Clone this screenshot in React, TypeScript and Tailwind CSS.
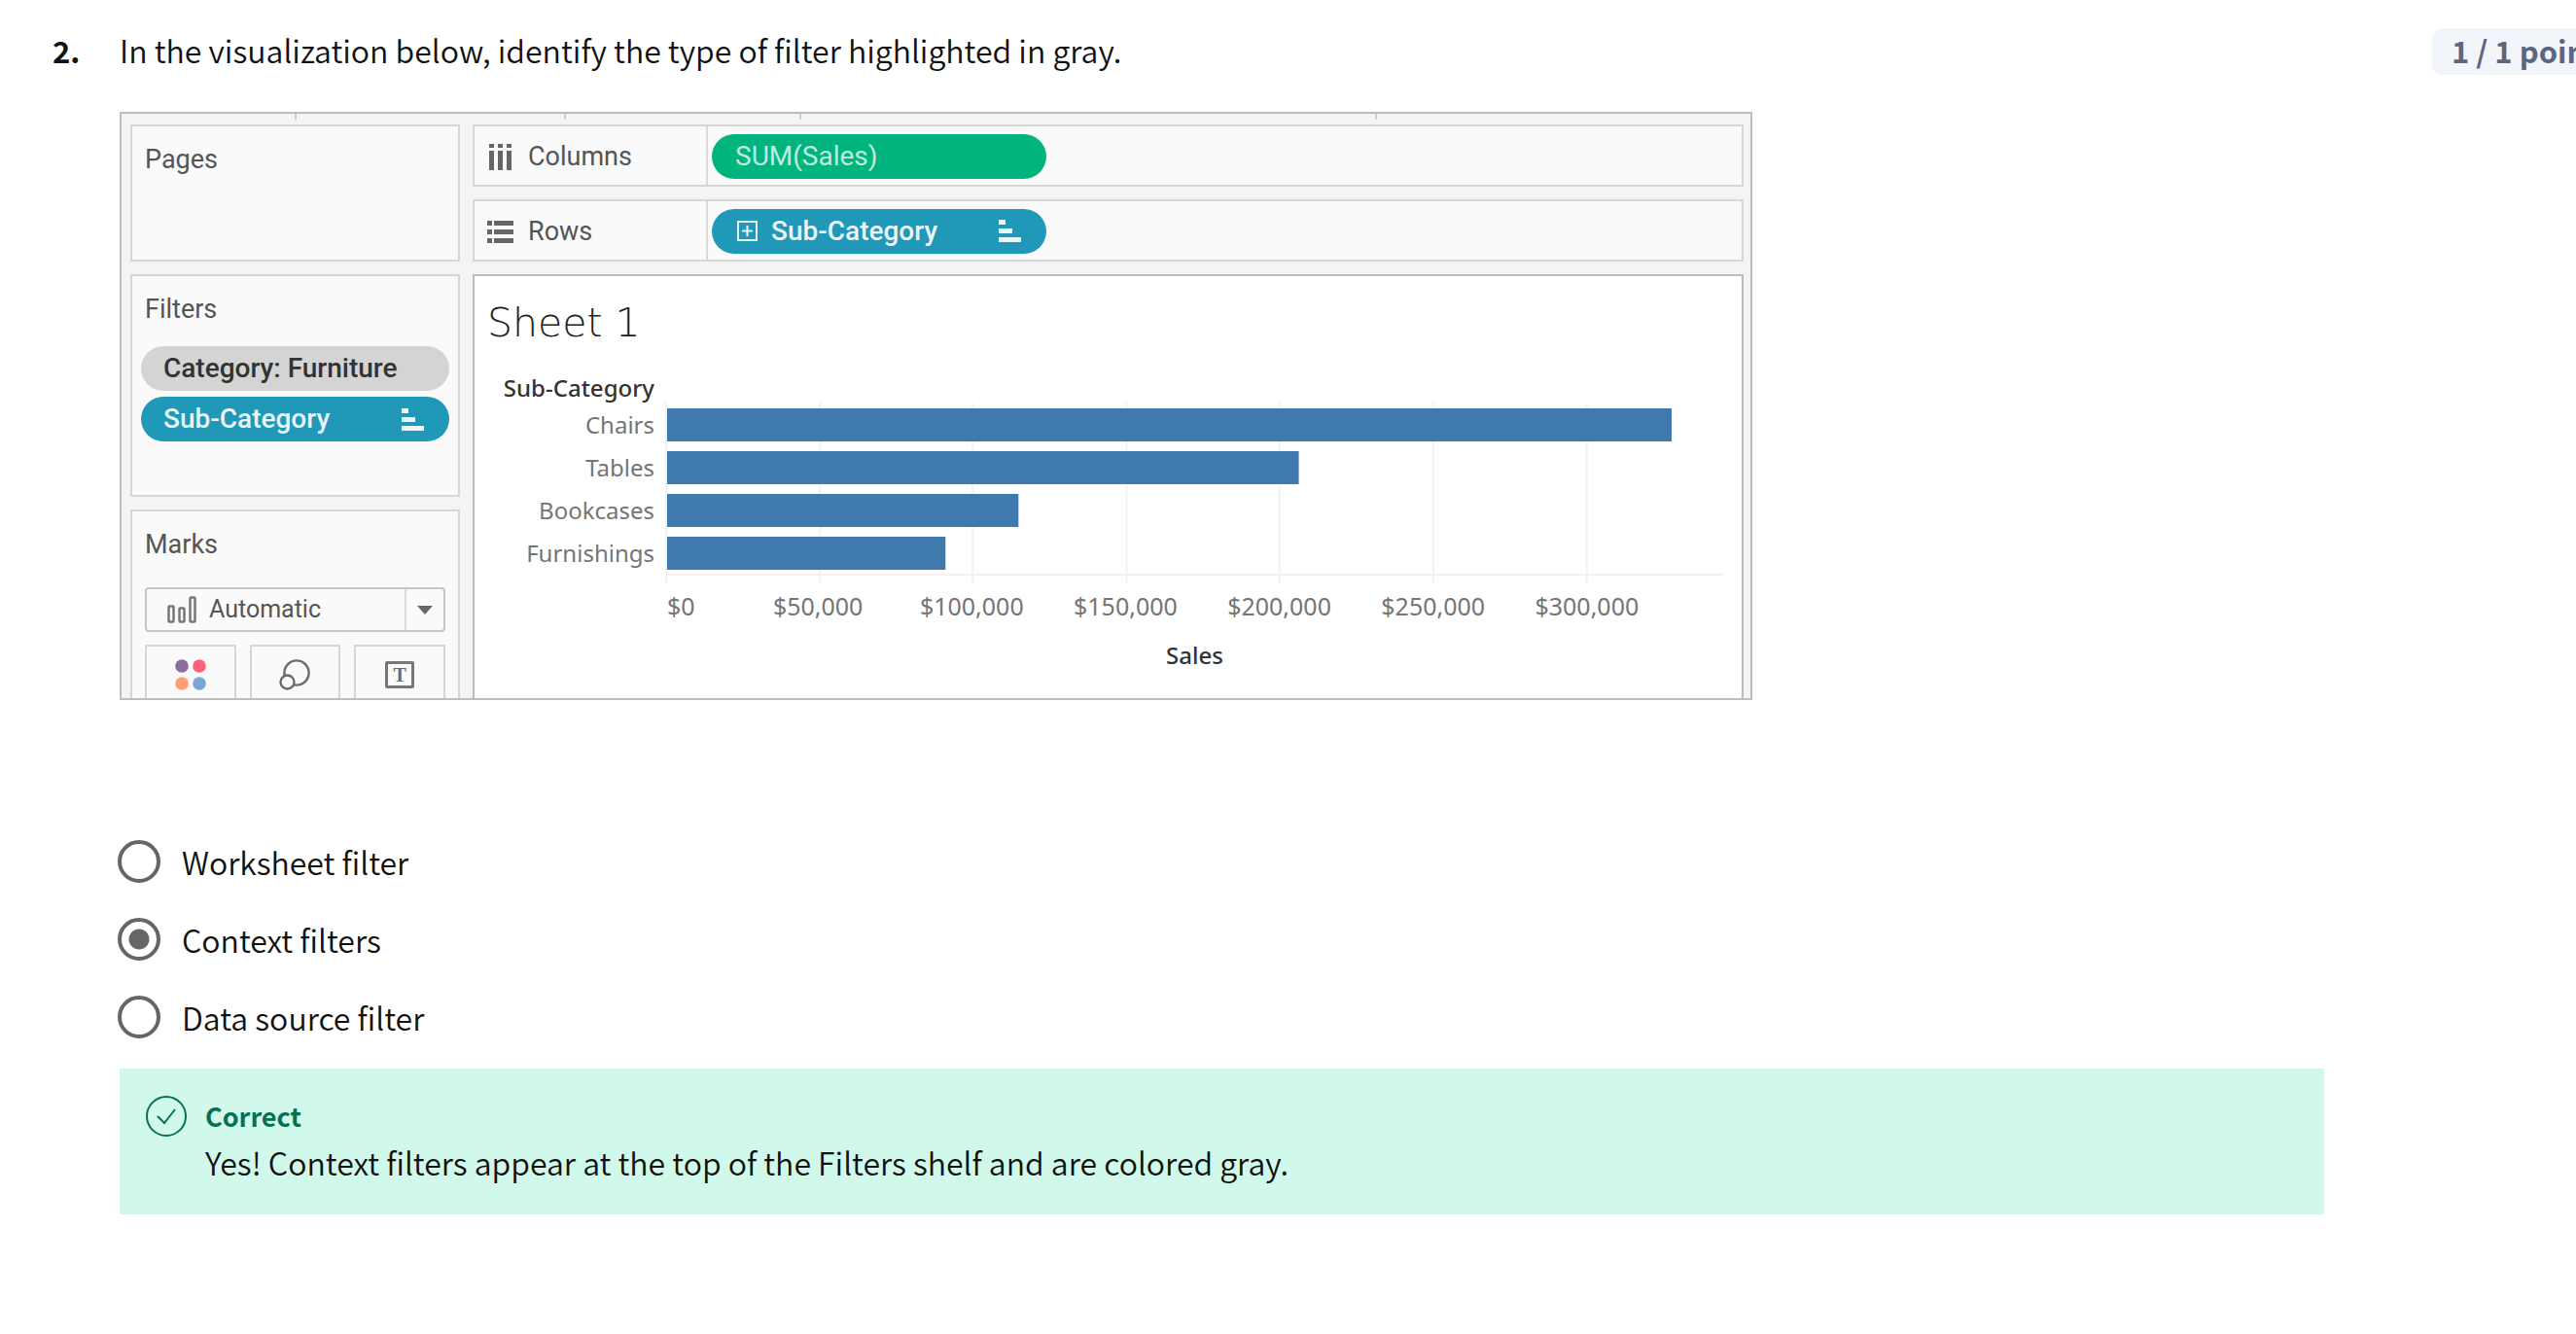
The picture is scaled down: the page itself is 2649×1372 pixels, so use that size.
import type { ReactNode } from "react";

const PAGE_FONT = "font-['Noto_Sans_CJK_SC','Noto_Sans',sans-serif]";

const categories = [
  { name: "Chairs", width: 1032 },
  { name: "Tables", width: 649 },
  { name: "Bookcases", width: 361 },
  { name: "Furnishings", width: 286 },
];
const PLOT_WIDTH = 1088;
const gridlines = [0, 158, 315, 473, 630, 788, 946];
const ticks = ["$50,000", "$100,000", "$150,000", "$200,000", "$250,000", "$300,000"];
const options = ["Worksheet filter", "Context filters", "Data source filter"];

function SortIcon() {
  return (
    <svg viewBox="0 0 23 23" className="size-[23px] shrink-0" fill="#e9f5f8" aria-hidden="true">
      <rect x="0" y="0" width="7" height="5" />
      <rect x="0" y="9" width="14" height="5" />
      <rect x="0" y="18" width="23" height="5" />
    </svg>
  );
}

function Shelf({ icon, label, children }: { icon: ReactNode; label: string; children: ReactNode }) {
  return (
    <div className="flex h-16 border-2 border-[#d6d6d6] bg-[#fafafa]">
      <div className="flex w-[240px] shrink-0 items-center gap-[15px] border-r-2 border-[#dadada] pt-0.5 pl-[13px]">
        {icon}
        <span>{label}</span>
      </div>
      <div className="flex flex-1 items-center pt-px pl-1">{children}</div>
    </div>
  );
}

function Panel({ title, className, children }: { title: string; className: string; children?: ReactNode }) {
  return (
    <section className={`border-2 border-[#d6d6d6] bg-[#fafafa] ${className}`}>
      <h2 className="px-[13px] pt-4 leading-9">{title}</h2>
      {children}
    </section>
  );
}

function BarChart() {
  return (
    <div className="flex pr-[18px] pl-7 font-['Noto_Sans',sans-serif] text-[24px] text-[#757575]">
      <div className="w-[157px] shrink-0 text-right">
        <div className="flex h-9 justify-end leading-9 font-medium whitespace-nowrap text-[#333]">Sub-Category</div>
        {categories.map((c) => (
          <div key={c.name} className="h-11 leading-10">
            {c.name}
          </div>
        ))}
      </div>
      <div className="min-w-0 flex-1 pt-[33px] pl-[11px]">
        <svg viewBox="0 0 1088 187" preserveAspectRatio="none" className="block h-[187px] w-full" role="img" aria-label="Sales by sub-category">
          {gridlines.map((x) => (
            <rect key={x} x={x} y="0" width="2" height="187" fill="#f2f2f2" />
          ))}
          <rect x="0" y="176" width={PLOT_WIDTH} height="2" fill="#f2f2f2" />
          {categories.map((c, i) => (
            <rect key={c.name} x="2" y={6 + i * 44} width={c.width} height="34" fill="#4079ab" />
          ))}
        </svg>
        <div className="grid grid-cols-[78fr_158fr_158fr_158fr_158fr_158fr_158fr_62fr] pt-1 text-center text-[25px] leading-9">
          <span className="pl-0.5 text-left">$0</span>
          {ticks.map((t) => (
            <span key={t}>{t}</span>
          ))}
        </div>
        <div className="pt-[15px] text-center leading-9 font-medium text-[#333]">Sales</div>
      </div>
    </div>
  );
}

function Worksheet() {
  return (
    <figure className="max-w-[1679px] border-2 border-[#bdbdbd] bg-[#f4f4f4] font-['Roboto',sans-serif] text-[27px] text-[#555]">
      <div className="flex h-[11px] items-start">
        <i className="h-1.5 w-[180px] border-r-2 border-[#cfcfcf]" />
        <i className="h-1.5 w-[277px] border-r-2 border-[#cfcfcf]" />
        <i className="h-1.5 w-[242px] border-r-2 border-[#cfcfcf]" />
        <i className="h-1.5 w-[592px] border-r-2 border-[#cfcfcf]" />
      </div>
      <div className="flex gap-[13px] pr-[7px] pl-[9px]">
        <div className="flex w-[339px] shrink-0 flex-col gap-[13px]">
          <Panel title="Pages" className="h-[141px]" />
          <Panel title="Filters" className="h-[229px]">
            <div className="flex flex-col gap-1.5 px-[9px] pt-5 text-[28px] font-medium">
              <div className="flex h-[46px] items-center rounded-full bg-[#d4d4d4] pl-[23px] text-[#333]">Category: Furniture</div>
              <div className="flex h-[46px] items-center justify-between rounded-full bg-[#2098b8] pr-[26px] pl-[23px] text-[#e9f5f8]">
                Sub-Category
                <SortIcon />
              </div>
            </div>
          </Panel>
          <Panel title="Marks" className="flex-1 border-b-0">
            <div className="px-[13px] pt-[26px]">
              <div className="flex h-[46px] items-center rounded-sm border-2 border-[#c6c6c6] pl-[21px]">
                <svg viewBox="0 0 30 28" className="mr-[13px] h-7 w-[30px] shrink-0" fill="none" stroke="#777" strokeWidth="2.5" aria-hidden="true">
                  <rect x="1.5" y="10.5" width="5" height="16" rx="1" />
                  <rect x="12.5" y="12.5" width="5" height="14" rx="1" />
                  <rect x="23.5" y="1.5" width="5" height="25" rx="1" />
                </svg>
                <select aria-label="Mark type" className="h-full flex-1 appearance-none bg-transparent text-[25px] outline-none">
                  <option>Automatic</option>
                </select>
                <span className="flex h-full w-10 items-center justify-center border-l-2 border-[#dadada]">
                  <svg viewBox="0 0 16 9" className="h-[9px] w-4" aria-hidden="true">
                    <path d="M0 0h16L8 9z" fill="#666" />
                  </svg>
                </span>
              </div>
              <div className="mt-[13px] grid grid-cols-3 gap-3.5">
                <button type="button" aria-label="Color" className="flex h-[55px] justify-center border-2 border-b-0 border-[#d6d6d6] pt-[13px]">
                  <svg viewBox="0 0 32 32" className="size-8">
                    <circle cx="7" cy="7" r="6.8" fill="#8a6d9c" />
                    <circle cx="25" cy="7" r="6.8" fill="#ff637c" />
                    <circle cx="7" cy="25" r="6.8" fill="#ffa072" />
                    <circle cx="25" cy="25" r="6.8" fill="#7ba6d0" />
                  </svg>
                </button>
                <button type="button" aria-label="Size" className="flex h-[55px] justify-center border-2 border-b-0 border-[#d6d6d6] pt-[13px]">
                  <svg viewBox="0 0 32 32" className="size-8" fill="#fafafa" stroke="#6b6b6b" strokeWidth="2.4">
                    <circle cx="18" cy="14" r="12.6" />
                    <circle cx="8.5" cy="23.5" r="7" />
                  </svg>
                </button>
                <button type="button" aria-label="Text" className="flex h-[55px] justify-center border-2 border-b-0 border-[#d6d6d6] pt-[15px]">
                  <span className="flex h-7 w-[30px] items-center justify-center rounded-xs border-[3px] border-[#777] font-['Liberation_Serif',serif] text-[20px] leading-none font-bold text-[#6b6b6b]">
                    T
                  </span>
                </button>
              </div>
            </div>
          </Panel>
        </div>
        <div className="flex min-w-0 flex-1 flex-col gap-[13px]">
          <Shelf
            label="Columns"
            icon={
              <svg viewBox="0 0 27 27" className="size-[27px]" fill="#666" aria-hidden="true">
                <path d="M2 0h5v4H2zM11 0h5v4h-5zM20 0h5v4h-5zM2 7h5v20H2zM11 7h5v20h-5zM20 7h5v20h-5z" />
              </svg>
            }
          >
            <div className="flex h-[46px] w-[344px] items-center rounded-full bg-[#00b47e] pl-6 text-[28px] text-[#c0ecdf]">SUM(Sales)</div>
          </Shelf>
          <Shelf
            label="Rows"
            icon={
              <svg viewBox="0 0 27 23" className="h-[23px] w-[27px]" fill="#666" aria-hidden="true">
                <path d="M0 0h5v5H0zM7 0h20v5H7zM0 9h5v5H0zM7 9h20v5H7zM0 18h5v5H0zM7 18h20v5H7z" />
              </svg>
            }
          >
            <div className="flex h-[46px] w-[344px] items-center rounded-full bg-[#2098b8] px-[26px] text-[28px] font-medium text-[#e9f5f8]">
              <svg viewBox="0 0 21 21" className="mr-3.5 size-[21px]" fill="none" stroke="currentColor" strokeWidth="2" aria-hidden="true">
                <path d="M1 1h19v19H1zM10.500 5v11M5 10.500h11" />
              </svg>
              <span className="flex-1">Sub-Category</span>
              <SortIcon />
            </div>
          </Shelf>
          <section className="flex-1 border-2 border-b-0 border-[#bdbdbd] bg-white">
            <h2 className="px-[13px] pt-4 pb-[17px] font-['DejaVu_Sans',sans-serif] text-[41px] leading-[64px] font-extralight text-[#222]">Sheet 1</h2>
            <BarChart />
          </section>
        </div>
      </div>
    </figure>
  );
}

export default function App() {
  return (
    <main className={`flex min-h-screen overflow-hidden bg-white pt-[29px] text-[32px] font-[350] text-[#111] ${PAGE_FONT}`}>
      <div className="w-[123px] shrink-0 pl-[54px] text-[31px] leading-[46px] font-bold">2.</div>
      <div className="mr-[111px] min-w-0 flex-1">
        <p className="leading-11">In the visualization below, identify the type of filter highlighted in gray.</p>
        <div className="mt-[42px] font-normal">
          <Worksheet />
        </div>
        <fieldset className="mt-[144px] -ml-0.5 flex flex-col gap-9">
          {options.map((o) => (
            <label key={o} className="flex items-center gap-[22px] leading-11">
              <input
                type="radio"
                name="answer"
                defaultChecked={o === "Context filters"}
                className="size-11 shrink-0 appearance-none rounded-full border-4 border-[#666] bg-clip-content p-[7px] checked:bg-[radial-gradient(circle,#666_10px,transparent_11px)]"
              />
              {o}
            </label>
          ))}
        </fieldset>
        <div className="mt-[31px] flex gap-[19px] bg-[#d0f9ec] pt-7 pb-7 pl-[27px]">
          <svg viewBox="0 0 42 42" className="size-[42px] shrink-0" fill="none" stroke="#087051" strokeWidth="2" aria-hidden="true">
            <circle cx="21" cy="21" r="20" />
            <path d="M12 21l7 7L30 14" />
          </svg>
          <div>
            <p className="text-[27px] leading-[42px] font-bold text-[#087051]">Correct</p>
            <p className="leading-[52px]">Yes! Context filters appear at the top of the Filters shelf and are colored gray.</p>
          </div>
        </div>
      </div>
      <div className="h-12 w-[148px] shrink-0 overflow-hidden rounded-l-[10px] bg-[#f2f5fa] pl-5 text-[31px] leading-[46px] font-bold whitespace-nowrap text-[#5b6780]">
        1 / 1 point
      </div>
    </main>
  );
}
